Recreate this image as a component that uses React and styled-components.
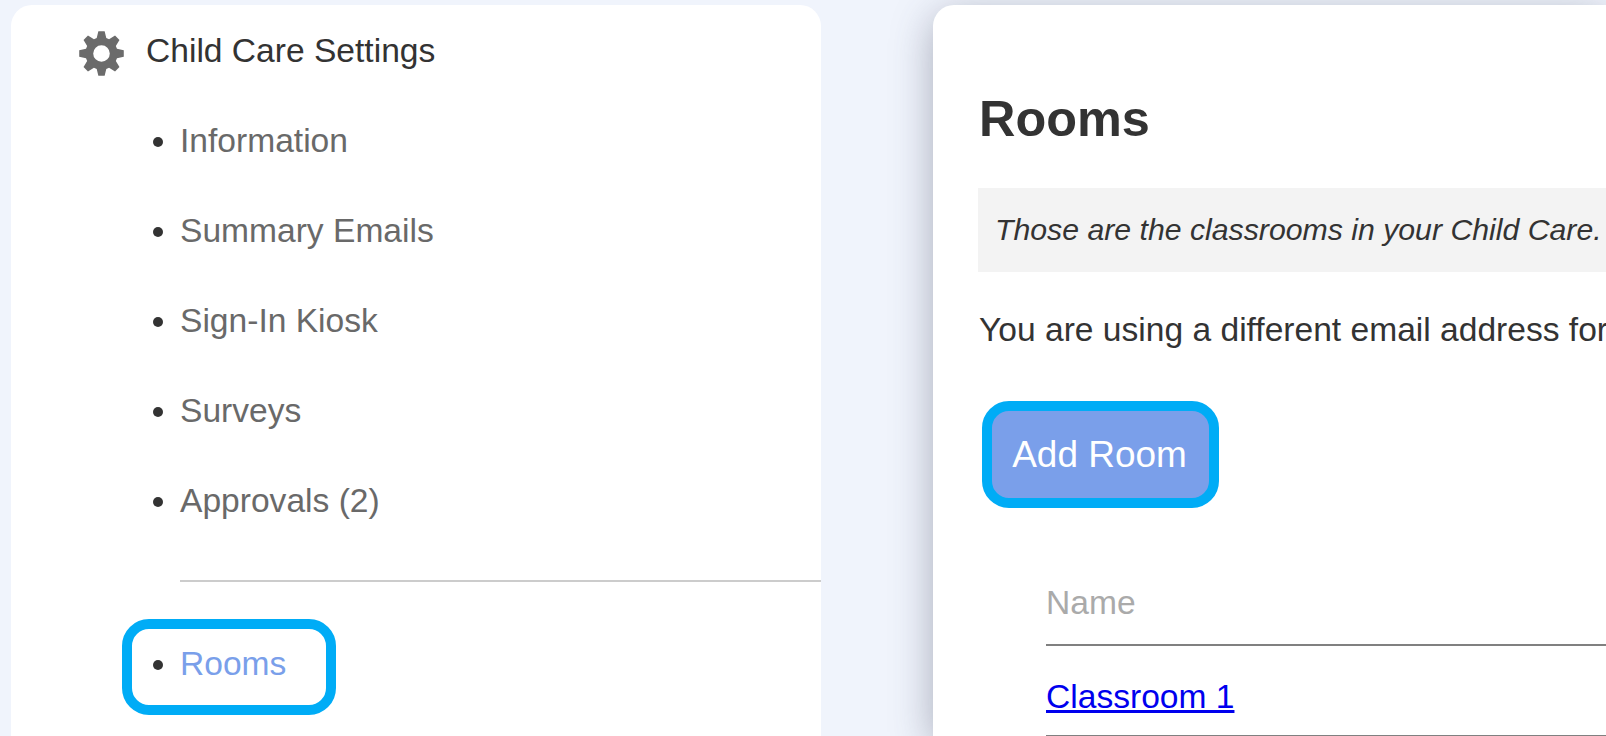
import React from 'react';
import styled, { createGlobalStyle } from 'styled-components';

const GlobalStyle = createGlobalStyle`
  html, body {
    margin: 0;
    height: 100%;
    overflow: hidden;
    background: #f0f4fc;
    font-family: 'Liberation Sans', Arial, sans-serif;
    color: #333;
  }
`;

const Page = styled.div`
  display: flex;
  gap: 112px;
  height: 736px;
  padding: 5px 0 0 11px;
  box-sizing: border-box;
  overflow: hidden;
`;

const Sidebar = styled.aside`
  flex: 0 0 810px;
  background: #fff;
  border-radius: 21px 21px 0 0;
  padding-top: 26px;
  box-sizing: border-box;
`;

const SectionHeader = styled.div`
  display: flex;
  align-items: center;
  gap: 22px;
  height: 45px;
  padding-left: 68px;
  font-size: 33.6px;
  color: #333;
`;

const HeaderLabel = styled.span`
  margin-bottom: 6px;
`;

const MenuList = styled.ul`
  margin: 0;
  padding: 0 0 0 169px;
  list-style: disc;
`;

const MenuItem = styled.li`
  height: 90px;
  line-height: 90px;
  font-size: 33.6px;
  color: #696969;
  &::marker {
    color: #333;
  }
`;

const FirstGroup = styled(MenuList)`
  margin-top: 20px;
`;

const Divider = styled.hr`
  margin: 34px 0 0 169px;
  height: 2px;
  border: 0;
  background: #ccc;
`;

const HighlightBox = styled.div`
  width: 214px;
  height: 96px;
  margin: 37px 0 0 111px;
  border: 10px solid #00acf6;
  border-radius: 27px;
  box-sizing: border-box;
`;

const ActiveList = styled.ul`
  margin: 0;
  padding: 0 0 0 48px;
  list-style: disc;
`;

const ActiveItem = styled.li`
  line-height: 70px;
  font-size: 33.6px;
  color: #7a9fea;
  &::marker {
    color: #333;
  }
`;

const Main = styled.main`
  flex: 1 0 auto;
  min-width: 0;
  background: #fff;
  border-radius: 21px 0 0 0;
  box-shadow: 0 10px 42px rgba(60, 66, 90, 0.4);
  padding: 0 0 0 45px;
  box-sizing: border-box;
`;

const Heading = styled.h2`
  margin: 85px 0 0;
  padding-left: 1px;
  font-size: 50.4px;
  line-height: 58px;
  font-weight: 700;
  color: #333;
`;

const Note = styled.div`
  margin-top: 40px;
  height: 84px;
  padding-left: 17px;
  background: #f3f3f3;
  font-size: 30.24px;
  font-style: italic;
  line-height: 84px;
  white-space: nowrap;
  color: #333;
`;

const Paragraph = styled.p`
  margin: 0;
  padding: 38px 0 0 1px;
  font-size: 33.6px;
  line-height: 40px;
  white-space: nowrap;
  color: #333;
`;

const AddButton = styled.button`
  display: block;
  width: 237px;
  height: 107px;
  margin: 51px 0 0 4px;
  border: 10px solid #00acf6;
  border-radius: 27px;
  background: #7a9fea;
  color: #fff;
  font-family: inherit;
  font-size: 36.96px;
  box-sizing: border-box;
  padding: 0 2px 0 0;
`;

const RoomsTable = styled.div`
  margin: 49px 0 0 68px;
`;

const HeaderRow = styled.div`
  height: 89px;
  line-height: 92px;
  border-bottom: 2px solid #808080;
  box-sizing: border-box;
  font-size: 33.6px;
  color: #aaa;
`;

const BodyRow = styled.div`
  height: 91px;
  line-height: 102px;
  border-bottom: 2px solid #808080;
  box-sizing: border-box;
  font-size: 33.6px;
`;

const RoomLink = styled.a`
  color: #0000ee;
  text-decoration: underline;
`;

// 8 tooth gear, same shape as the settings cog in the sidebar
const gearPath = () => {
  const teeth = 8;
  const pts = [];
  for (let i = 0; i < teeth; i++) {
    const a = (i * Math.PI * 2) / teeth - Math.PI / 2;
    [[16.2, -0.3], [22.5, -0.14], [22.5, 0.14], [16.2, 0.3]].forEach(([r, off]) => {
      pts.push(`${(22.5 + r * Math.cos(a + off)).toFixed(2)} ${(22.5 + r * Math.sin(a + off)).toFixed(2)}`);
    });
  }
  const hole = 'M30.8 22.5a8.3 8.3 0 1 0-16.6 0a8.3 8.3 0 1 0 16.6 0z';
  return `M${pts.join('L')}Z${hole}`;
};

const GearIcon = () => (
  <svg width="45" height="45" viewBox="0 0 45 45">
    <path d={gearPath()} fill="#6b6b6b" fillRule="evenodd" />
  </svg>
);

const menuItems = ['Information', 'Summary Emails', 'Sign-In Kiosk', 'Surveys', 'Approvals (2)'];

export default function App() {
  return (
    <>
      <GlobalStyle />
      <Page>
        <Sidebar>
          <SectionHeader>
            <GearIcon />
            <HeaderLabel>Child Care Settings</HeaderLabel>
          </SectionHeader>
          <FirstGroup>
            {menuItems.map(item => (
              <MenuItem key={item}>{item}</MenuItem>
            ))}
          </FirstGroup>
          <Divider />
          <HighlightBox>
            <ActiveList>
              <ActiveItem>Rooms</ActiveItem>
            </ActiveList>
          </HighlightBox>
        </Sidebar>
        <Main>
          <Heading>Rooms</Heading>
          <Note>Those are the classrooms in your Child Care.</Note>
          <Paragraph>You are using a different email address for</Paragraph>
          <AddButton>Add Room</AddButton>
          <RoomsTable>
            <HeaderRow>Name</HeaderRow>
            <BodyRow>
              <RoomLink href="#">Classroom 1</RoomLink>
            </BodyRow>
          </RoomsTable>
        </Main>
      </Page>
    </>
  );
}
